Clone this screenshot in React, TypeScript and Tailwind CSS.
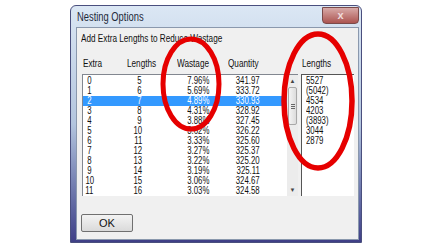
const rows = [
  ['0', '5', '7.96%', '341.97'],
  ['1', '6', '5.69%', '333.72'],
  ['2', '7', '4.89%', '330.93'],
  ['3', '8', '4.31%', '328.92'],
  ['4', '9', '3.88%', '327.45'],
  ['5', '10', '3.62%', '326.22'],
  ['6', '11', '3.33%', '325.60'],
  ['7', '12', '3.27%', '325.37'],
  ['8', '13', '3.22%', '325.20'],
  ['9', '14', '3.19%', '325.11'],
  ['10', '15', '3.06%', '324.67'],
  ['11', '16', '3.03%', '324.58'],
];

const lengths = ['5527', '(5042)', '4534', '4203', '(3893)', '3044', '2879'];

const font = "font-['Liberation_Sans',Arial,sans-serif]";

// the screenshot's font is narrow, so squeeze the glyphs horizontally
function L({ children }: { children: React.ReactNode }) {
  return <span className="inline-block whitespace-nowrap origin-left scale-x-[0.78]">{children}</span>;
}

function R({ children }: { children: React.ReactNode }) {
  return <span className="inline-block whitespace-nowrap origin-right scale-x-[0.78]">{children}</span>;
}

export default function App() {
  return (
    <div className={`relative w-[430px] h-[250px] bg-white overflow-hidden text-[#111] ${font}`}>
      <div className="ml-[70px] mt-[5px] w-[292px] h-[238px] rounded-t-[6px] border border-[#4a4f7e] bg-gradient-to-b from-[#dbe7f4] via-[#b3c5de] to-[#3f3f86] flex flex-col pl-[5px] pr-[2px] pb-[2px]">
        {/* title bar */}
        <div className="h-[21px] flex items-center justify-between">
          <span className="ml-[1px] mt-[1px] text-[12px] text-[#1e2a3a]"><L>Nesting Options</L></span>
          <div className="w-[37px] h-[17px] -mt-[3px] rounded-b-[4px] border border-[#7a4a4a] bg-gradient-to-b from-[#d8aaa8] via-[#c27f7c] to-[#ab5451] flex items-center justify-center text-[11px] font-bold text-[#f0dcdc] leading-none">
            x
          </div>
        </div>

        {/* client area */}
        <div className="flex-1 bg-[#f0f0f0] border border-[#8a98ad] flex flex-col">
          <div className="ml-[4px] mt-[5px] h-[11px] leading-[11px] text-[10.5px]"><L>Add Extra Lengths to Reduce Wastage</L></div>

          <div className="mt-[14px] ml-[6px] h-[11px] leading-[11px] text-[10.5px] flex">
            <span className="w-[44px]"><L>Extra</L></span>
            <span className="w-[50px]"><L>Lengths</L></span>
            <span className="w-[51px]"><L>Wastage</L></span>
            <span className="w-[74px]"><L>Quantity</L></span>
            <span><L>Lengths</L></span>
          </div>

          <div className="mt-[5px] ml-[5px] flex h-[122px]">
            {/* main list */}
            <div className="w-[216px] flex bg-white border-l border-t border-[#828790]">
              <div className="flex-1 pt-[1px] text-[10px] leading-[10px]">
                {rows.map((r, i) => (
                  <div
                    key={r[0]}
                    className={`flex h-[10px] ${i === 2 ? 'bg-[#3399ff] text-white' : ''}`}
                  >
                    <span className="w-[9px] text-right"><R>{r[0]}</R></span>
                    <span className="w-[50px] text-right"><R>{r[1]}</R></span>
                    <span className="w-[67px] text-right"><R>{r[2]}</R></span>
                    <span className="w-[51px] text-right"><R>{r[3]}</R></span>
                  </div>
                ))}
              </div>
              {/* scrollbar */}
              <div className="w-[11px] bg-[#ececec] flex flex-col items-center">
                <div className="h-[12px] flex items-center justify-center text-[6px] text-[#444]">▲</div>
                <div className="w-[9px] h-[38px] border border-[#a8a8a8] rounded-[2px] bg-gradient-to-r from-[#f4f4f4] to-[#dcdcdc] flex flex-col items-center justify-center gap-[1px]">
                  <div className="w-[4px] h-px bg-[#666]" />
                  <div className="w-[4px] h-px bg-[#666]" />
                  <div className="w-[4px] h-px bg-[#666]" />
                </div>
                <div className="flex-1" />
                <div className="h-[12px] flex items-center justify-center text-[6px] text-[#444]">▼</div>
              </div>
            </div>

            {/* lengths list */}
            <div className="ml-[3px] w-[53px] bg-white border-l border-t border-[#555] pt-[1px] pl-[4px] text-[10px] leading-[10px]">
              {lengths.map(l => (
                <div key={l} className="h-[10px]"><L>{l}</L></div>
              ))}
            </div>
          </div>

          <div className="mt-[18px] ml-[4px] w-[52px] h-[18px] border border-[#707070] rounded-[2px] bg-gradient-to-b from-[#f3f3f3] to-[#dadada] flex items-center justify-center text-[11px]">
            OK
          </div>
        </div>
      </div>

      {/* red annotation ellipses */}
      <svg className="absolute left-0 top-0" width="430" height="250" viewBox="0 0 430 250">
        <ellipse cx="191" cy="84" rx="28" ry="45" fill="none" stroke="#e60000" strokeWidth="5" />
        <ellipse cx="318" cy="101" rx="34" ry="67" fill="none" stroke="#e60000" strokeWidth="5.5" />
      </svg>
    </div>
  );
}
